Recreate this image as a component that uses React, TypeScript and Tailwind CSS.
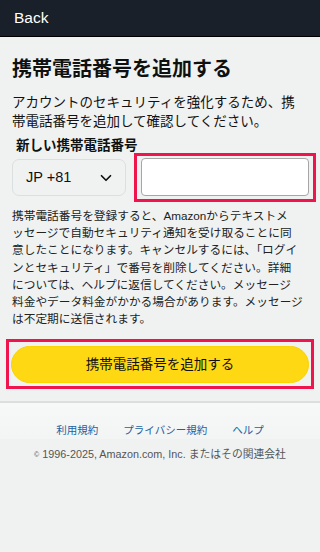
import React from 'react';
import { ChevronDown } from 'lucide-react';

const noticeLines = [
  '携帯電話番号を登録すると、Amazonからテキストメ',
  'ッセージで自動セキュリティ通知を受け取ることに同',
  '意したことになります。キャンセルするには、「ログイ',
  'ンとセキュリティ」で番号を削除してください。詳細',
  'については、ヘルプに返信してください。メッセージ',
  '料金やデータ料金がかかる場合があります。メッセージ',
  'は不定期に送信されます。',
];

const App: React.FC = () => {
  return (
    <div
      className="min-h-[552px] bg-[#f0f2f2] text-[#0f1111]"
      style={{ fontFamily: '"Liberation Sans", "Noto Sans CJK JP", sans-serif' }}
    >
      <header className="h-[37px] bg-[#19202a] border-b border-black flex items-center px-[14px]">
        <span className="text-white text-[15.5px]">Back</span>
      </header>

      <main className="px-3">
        <h1 className="mt-[19px] text-[20px] leading-[26px] font-bold">携帯電話番号を追加する</h1>
        <p className="mt-[11px] text-[13.5px] leading-[19px] text-[#111]">
          アカウントのセキュリティを強化するため、携帯電話番号を追加して確認してください。
        </p>

        <label className="block mt-[6px] pl-1 text-[13.5px] leading-[18px] font-bold">新しい携帯電話番号</label>

        <div className="flex items-center gap-2 -mt-[2px]">
          <button className="w-[114px] h-[37px] shrink-0 rounded-[7px] border border-[#dcdfdf] bg-[#f0f2f2] flex items-center justify-between pl-[13px] pr-[10px]">
            <span className="text-[14.5px] text-[#0f1111]">JP +81</span>
            <ChevronDown className="w-[18px] h-[18px] text-[#0f1111]" strokeWidth={2.25} />
          </button>
          <div className="w-[182px] shrink-0 border-[3px] border-[#f0144e] px-1 pt-[2px] pb-[3px]">
            <input
              type="tel"
              className="block w-full h-[38px] rounded-[4px] border border-[#a6a6a6] bg-white outline-none px-2 text-sm"
            />
          </div>
        </div>

        <p className="mt-[5px] text-[11.7px] leading-[17.2px] text-[#222]">
          {noticeLines.map((line) => (
            <span key={line} className="block whitespace-nowrap">{line}</span>
          ))}
        </p>

        <div className="-mx-[6px] mt-[12px] border-[3px] border-[#f0144e] px-[2px] pt-1 pb-[3px]">
          <button className="w-full h-[37px] rounded-full bg-[#ffd814] border border-[#fcd200] text-[13.5px] text-[#0f1111]">
            携帯電話番号を追加する
          </button>
        </div>
      </main>

      <footer className="mt-3">
        <div className="h-[2px] bg-[#dcdede]" />
        <div className="h-[36px] bg-gradient-to-b from-[#f7f8f8] to-[#f3f4f4] flex items-end justify-center gap-[25px] pb-[1px] text-[10.5px] text-[#2162a1]">
          <a>利用規約</a>
          <a>プライバシー規約</a>
          <a>ヘルプ</a>
        </div>
        <p className="mt-[7px] text-center text-[10.8px] text-[#555]">
          <span className="text-[7px] align-middle">©</span> 1996-2025, Amazon.com, Inc. またはその関連会社
        </p>
      </footer>
    </div>
  );
};

export default App;
